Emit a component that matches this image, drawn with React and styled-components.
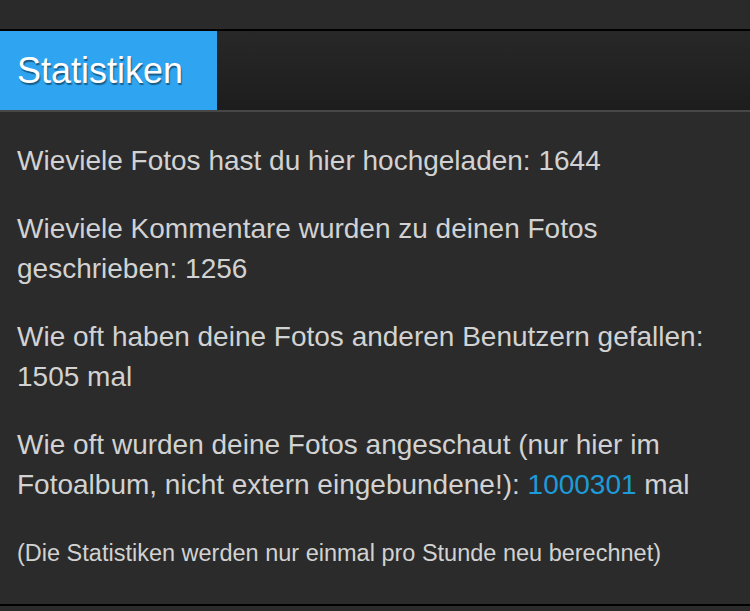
import React from 'react';
import styled, { createGlobalStyle } from 'styled-components';

const GlobalStyle = createGlobalStyle`
  html, body {
    margin: 0;
    padding: 0;
    background: #2b2b2b;
  }
  body {
    font-family: "Liberation Sans", Arial, Helvetica, sans-serif;
  }
`;

const Page = styled.div`
  width: 750px;
  min-height: 611px;
  background: #2b2b2b;
`;

const TopBar = styled.div`
  height: 29px;
  background: #2a2a2a;
  border-bottom: 2px solid #000;
`;

const Header = styled.div`
  display: flex;
  height: 79px;
  background: linear-gradient(to bottom, #282828, #1d1d1d);
  border-bottom: 2px solid #474747;
`;

const Tab = styled.div`
  display: flex;
  align-items: center;
  width: 217px;
  box-sizing: border-box;
  padding-left: 17px;
  background: #2fa5f2;
  color: #fff;
  font-size: 36px;
  text-shadow: 1px 2px 1px rgba(0, 0, 0, 0.45);
`;

const Body = styled.div`
  padding: 29px 17px 31px;
  background: #2b2b2b;
  border-bottom: 2px solid #000;
`;

const Stat = styled.p`
  margin: 0 0 28px;
  color: #d2d2d2;
  font-size: ${({ small }) => (small ? '23.5px' : '28px')};
  line-height: 40px;

  &:last-child {
    margin-bottom: 0;
  }
`;

const Count = styled.span`
  color: #1c9bd8;
`;

export default function App() {
  return (
    <>
      <GlobalStyle />
      <Page>
        <TopBar />
        <Header>
          <Tab>Statistiken</Tab>
        </Header>
        <Body>
          <Stat>Wieviele Fotos hast du hier hochgeladen: 1644</Stat>
          <Stat>Wieviele Kommentare wurden zu deinen Fotos geschrieben: 1256</Stat>
          <Stat>Wie oft haben deine Fotos anderen Benutzern gefallen: 1505 mal</Stat>
          <Stat>
            Wie oft wurden deine Fotos angeschaut (nur hier im Fotoalbum, nicht extern
            eingebundene!): <Count>1000301</Count> mal
          </Stat>
          <Stat small>(Die Statistiken werden nur einmal pro Stunde neu berechnet)</Stat>
        </Body>
      </Page>
    </>
  );
}
